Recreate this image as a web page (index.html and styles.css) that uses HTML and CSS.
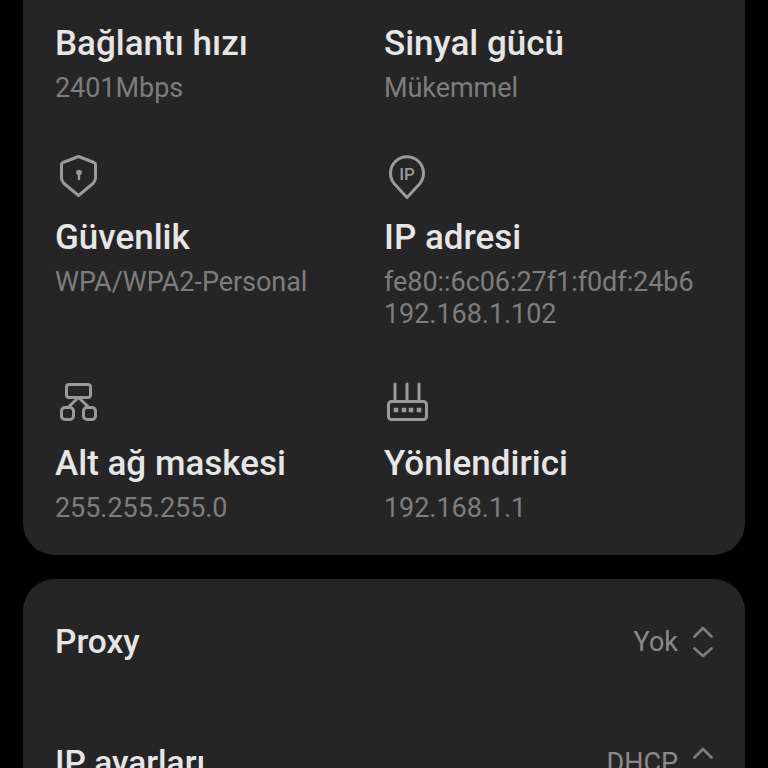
FILE: index.html
```html
<!DOCTYPE html>
<html lang="tr">
<head>
<meta charset="utf-8">
<title>Wi-Fi</title>
<link rel="stylesheet" href="styles.css">
</head>
<body>
<main class="page">
  <section class="card details">
    <div class="item item-first">
      <h2 class="title">Bağlantı hızı</h2>
      <p class="sub">2401Mbps</p>
    </div>
    <div class="item item-first">
      <h2 class="title">Sinyal gücü</h2>
      <p class="sub">Mükemmel</p>
    </div>
    <div class="item item-mid">
      <svg class="icon" viewBox="0 0 44 44" fill="none" stroke="#9a9a9a" stroke-width="3" stroke-linejoin="round" stroke-linecap="round">
        <path d="M23.500 3.500 39 9.500Q40.500 10 40.500 11.500V25Q40.500 28 38 30.500L23.500 42.500 9 30.500Q6.500 28 6.500 25V11.500Q6.500 10 8 9.500Z"/>
        <circle cx="24" cy="19.500" r="2.800" fill="#9a9a9a" stroke="none"/>
        <path d="M24 20v6" stroke-width="2.400"/>
      </svg>
      <h2 class="title">Güvenlik</h2>
      <p class="sub">WPA/WPA2-Personal</p>
    </div>
    <div class="item item-mid">
      <svg class="icon" viewBox="0 0 44 44" fill="none" stroke="#9a9a9a" stroke-width="3" stroke-linejoin="round">
        <path d="M23 44.500 10.500 31A16.500 16.500 0 1 1 35.500 31Z"/>
        <text class="pin-label" x="23" y="26.500" text-anchor="middle">IP</text>
      </svg>
      <h2 class="title">IP adresi</h2>
      <p class="sub">fe80::6c06:27f1:f0df:24b6<br>192.168.1.102</p>
    </div>
    <div class="item item-mid">
      <svg class="icon" viewBox="0 0 44 44" fill="none" stroke="#9a9a9a" stroke-width="3" stroke-linejoin="round" stroke-linecap="round">
        <rect x="11.500" y="5.500" width="24" height="13" rx="2.500"/>
        <rect x="6.500" y="28.500" width="12" height="12" rx="3.500"/>
        <rect x="28.500" y="28.500" width="12" height="12" rx="3.500"/>
        <path d="M23.500 18.500 13 28.500M23.500 18.500 34 28.500"/>
      </svg>
      <h2 class="title">Alt ağ maskesi</h2>
      <p class="sub">255.255.255.0</p>
    </div>
    <div class="item item-mid">
      <svg class="icon" viewBox="0 0 44 44" fill="none" stroke="#9a9a9a" stroke-width="3" stroke-linejoin="round" stroke-linecap="round">
        <path d="M11 5v17M23 5v17M35 5v17"/>
        <rect x="4.500" y="22.500" width="38" height="18" rx="3"/>
        <path d="M9.700 31h4.600M17.700 31h4.600M24.700 31h4.600M32.700 31h4.600" stroke-width="4.600" stroke-linecap="butt"/>
      </svg>
      <h2 class="title">Yönlendirici</h2>
      <p class="sub">192.168.1.1</p>
    </div>
  </section>
  <section class="card settings">
    <div class="row">
      <span class="row-label">Proxy</span>
      <span class="row-value">Yok
        <svg class="updown" viewBox="0 0 24 34" fill="none" stroke="#7c7c7c" stroke-width="2.800" stroke-linecap="round" stroke-linejoin="round"><path d="M3.500 11.500 12 3 20.500 11.500M3.500 23.500 12 31 20.500 23.500"/></svg>
      </span>
    </div>
    <div class="row">
      <span class="row-label">IP ayarları</span>
      <span class="row-value">DHCP
        <svg class="updown" viewBox="0 0 24 34" fill="none" stroke="#7c7c7c" stroke-width="2.800" stroke-linecap="round" stroke-linejoin="round"><path d="M3.500 11.500 12 3 20.500 11.500M3.500 23.500 12 31 20.500 23.500"/></svg>
      </span>
    </div>
  </section>
</main>
</body>
</html>
```
FILE: styles.css
```css
html, body {
  margin: 0;
  height: 100%;
  background: #000;
  overflow: hidden;
}
.page {
  display: flex;
  flex-direction: column;
  gap: 24px;
  margin-top: -60px;
  padding: 0 23px;
  font-family: Roboto, "Noto Sans", sans-serif;
}
.card {
  background: #252525;
  border-radius: 32px;
}
.details {
  display: grid;
  grid-template-columns: 329px 1fr;
  padding: 0 32px 31px;
}
.item {
  min-width: 0;
}
.item-first {
  padding-top: 84px;
}
.item-mid {
  padding-top: 48.5px;
}
.icon {
  display: block;
  width: 44px;
  height: 44px;
  margin: 0 0 21px 0;
  overflow: visible;
}
.title {
  margin: 0;
  font-size: 35px;
  line-height: 40px;
  font-weight: 500;
  color: #e6e6e6;
}
.sub {
  margin: 9px 0 0;
  font-size: 27px;
  line-height: 31.5px;
  font-weight: 400;
  letter-spacing: -0.05px;
  color: #7d7d7d;
}
.pin-label {
  font-size: 17px;
  font-weight: 500;
  fill: #9a9a9a;
  stroke: none;
  font-family: Roboto, sans-serif;
}
.settings {
  padding: 2px 30px 0 32px;
}
.row {
  display: flex;
  justify-content: space-between;
  align-items: center;
  height: 121px;
}
.row-label {
  font-size: 33.5px;
  font-weight: 500;
  color: #e6e6e6;
}
.row-value {
  display: flex;
  align-items: center;
  gap: 13px;
  font-size: 27px;
  color: #8a8a8a;
}
.updown {
  width: 24px;
  height: 34px;
}
```
